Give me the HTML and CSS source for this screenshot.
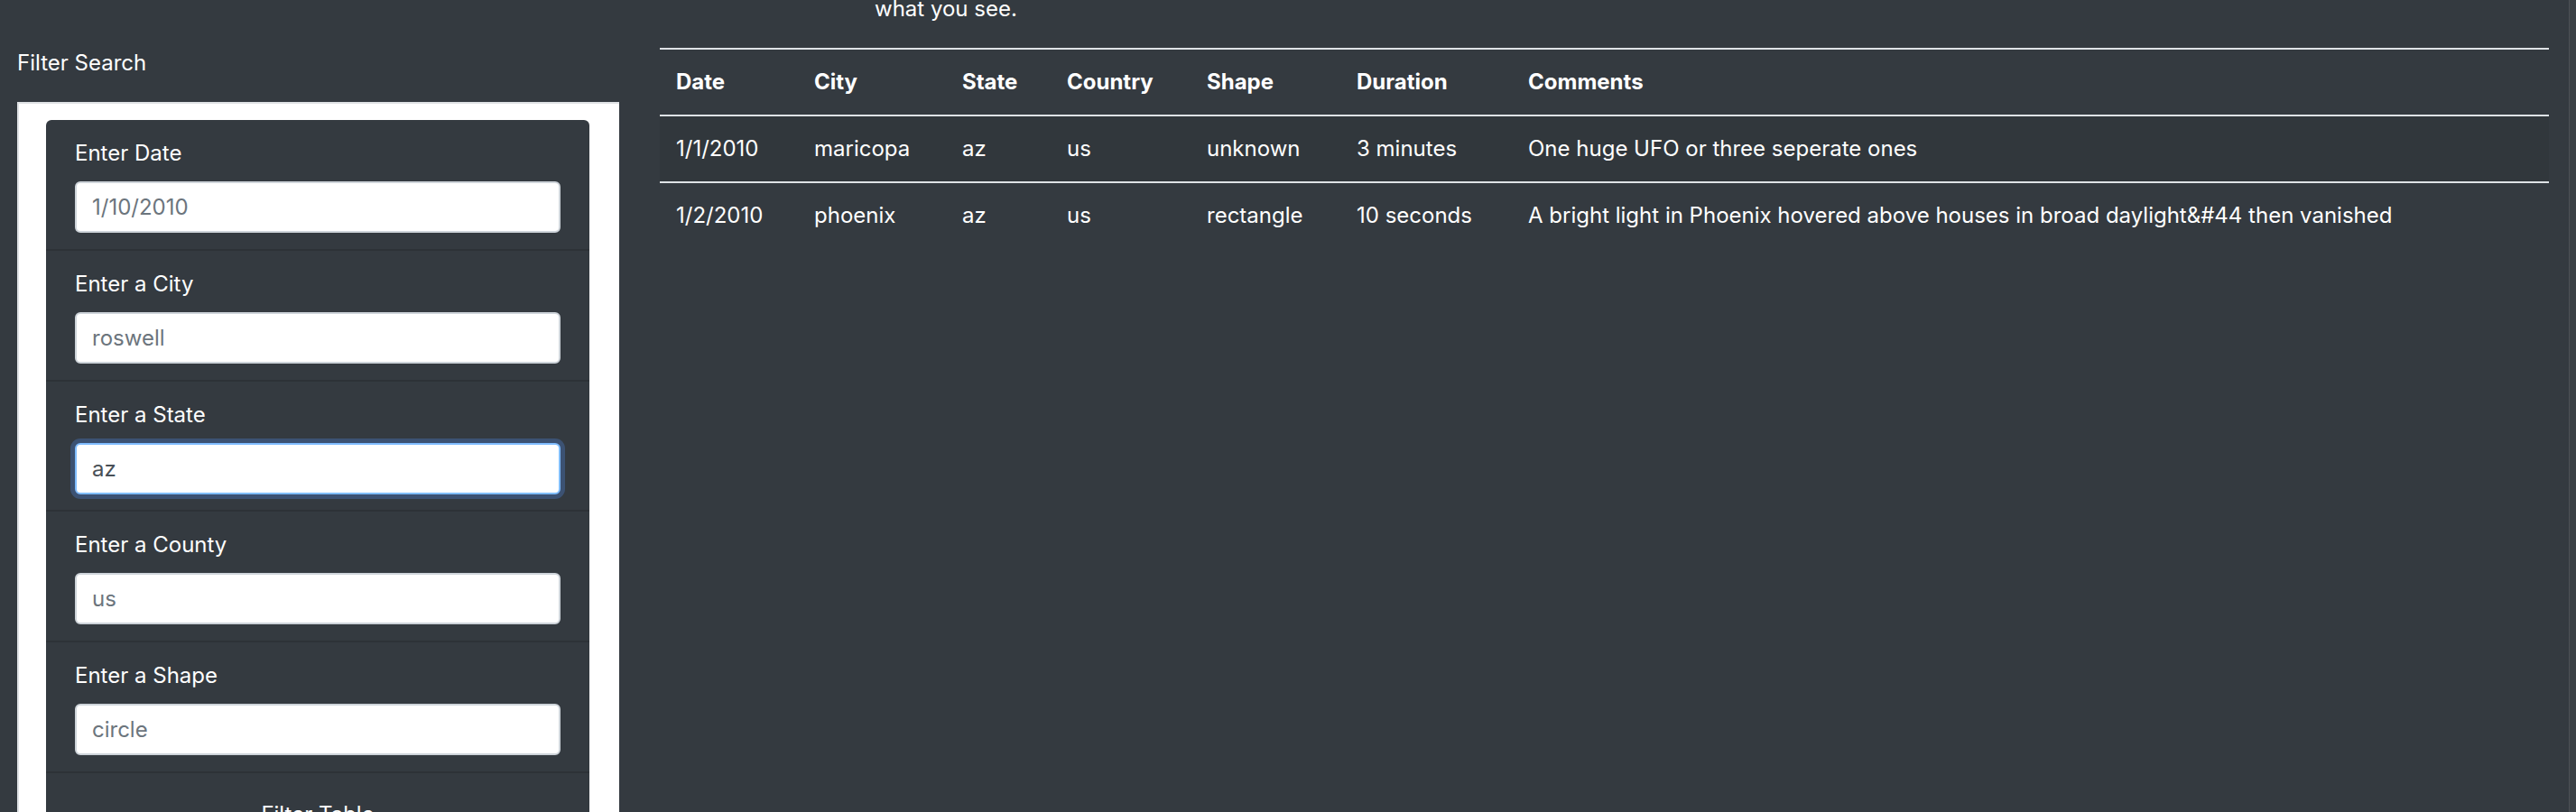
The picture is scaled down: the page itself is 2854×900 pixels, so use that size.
FILE: index.html
```html
<!DOCTYPE html>
<html lang="en">
<head>
<meta charset="utf-8">
<title>UFO Sightings</title>
<link rel="stylesheet" href="styles.css">
</head>
<body>
<div class="page">
  <div class="layout">
    <aside class="filters">
      <div class="filters-title">Filter Search</div>
      <div class="filters-box">
        <form class="filter-card">
          <div class="filter-item">
            <label class="filter-label" for="datetime">Enter Date</label>
            <input class="filter-input" id="datetime" type="text" placeholder="1/10/2010">
          </div>
          <div class="filter-item">
            <label class="filter-label" for="city">Enter a City</label>
            <input class="filter-input" id="city" type="text" placeholder="roswell">
          </div>
          <div class="filter-item">
            <label class="filter-label" for="state">Enter a State</label>
            <input class="filter-input is-focused" id="state" type="text" value="az">
          </div>
          <div class="filter-item">
            <label class="filter-label" for="country">Enter a County</label>
            <input class="filter-input" id="country" type="text" placeholder="us">
          </div>
          <div class="filter-item">
            <label class="filter-label" for="shape">Enter a Shape</label>
            <input class="filter-input" id="shape" type="text" placeholder="circle">
          </div>
          <div class="filter-item filter-action">
            <button class="filter-btn" type="button">Filter Table</button>
          </div>
        </form>
      </div>
    </aside>
    <main class="results">
      <p class="intro">what you see.</p>
      <table class="ufo-table">
        <colgroup>
          <col class="c-date"><col class="c-city"><col class="c-state"><col class="c-country"><col class="c-shape"><col class="c-duration"><col class="c-comments">
        </colgroup>
        <thead>
          <tr><th>Date</th><th>City</th><th>State</th><th>Country</th><th>Shape</th><th>Duration</th><th>Comments</th></tr>
        </thead>
        <tbody>
          <tr class="striped"><td>1/1/2010</td><td>maricopa</td><td>az</td><td>us</td><td>unknown</td><td>3 minutes</td><td>One huge UFO or three seperate ones</td></tr>
          <tr><td>1/2/2010</td><td>phoenix</td><td>az</td><td>us</td><td>rectangle</td><td>10 seconds</td><td>A bright light in Phoenix hovered above houses in broad daylight&amp;#44 then vanished</td></tr>
        </tbody>
      </table>
    </main>
  </div>
  <div class="scrollbar"></div>
</div>
</body>
</html>
```

FILE: styles.css
```css
html, body {
  margin: 0;
  padding: 0;
  height: 900px;
  overflow: hidden;
  background: #343a40;
}
body {
  font-family: Inter, "Noto Sans", sans-serif;
  font-size: 24px;
  line-height: 36px;
  color: #fff;
}
.page {
  display: flex;
  height: 900px;
}
.layout {
  flex: 1;
  display: flex;
  gap: 45px;
  padding: 0 22px 0 19px;
  min-width: 0;
}
.filters {
  width: 667px;
  flex: none;
}
.filters-title {
  margin-top: 52px;
  margin-bottom: 25px;
}
.filters-box {
  background: #fff;
  border: 2px solid #dfe2e5;
  border-right: 0;
  border-bottom: 0;
  padding: 18px 33px 0 30px;
}
.filter-card {
  background: #343a40;
  border-radius: 6px;
  margin: 0;
}
.filter-item {
  padding: 19px 32px 17.75px 32px;
  border-bottom: 2px solid #2d3237;
  display: flex;
  flex-direction: column;
}
.filter-label {
  display: block;
  margin-bottom: 13px;
}
.filter-input {
  box-sizing: border-box;
  height: 57px;
  width: 100%;
  padding: 0 17px;
  border: 2px solid #ced4da;
  border-radius: 6px;
  background: #fff;
  font-family: inherit;
  font-size: 24px;
  color: #495057;
  outline: none;
}
.filter-input::placeholder {
  color: #6c757d;
  opacity: 1;
}
.filter-input.is-focused {
  border-color: #80bdff;
  box-shadow: 0 0 0 5px #3c5273;
}
.filter-action {
  padding-top: 28px;
  align-items: center;
  border-bottom: 0;
}
.filter-btn {
  background: none;
  border: 0;
  padding: 0;
  font-family: inherit;
  font-size: 24px;
  line-height: 36px;
  color: #fff;
}
.results {
  flex: 1;
  min-width: 0;
}
.intro {
  margin: -8px 0 25px 0;
  padding-left: 238px;
}
.ufo-table {
  width: 100%;
  border-collapse: collapse;
  table-layout: fixed;
  border-top: 2px solid #dee2e6;
}
.c-date { width: 153px; }
.c-city { width: 164px; }
.c-state { width: 116px; }
.c-country { width: 155px; }
.c-shape { width: 166px; }
.c-duration { width: 190px; }
.ufo-table th,
.ufo-table td {
  padding: 18px;
  text-align: left;
  white-space: nowrap;
  vertical-align: top;
}
.ufo-table th {
  font-weight: 700;
  border-bottom: 2px solid #dee2e6;
}
.ufo-table td {
  font-weight: 400;
  border-top: 2px solid #dee2e6;
}
.ufo-table tr.striped td {
  background: rgba(0, 0, 0, 0.05);
}
.scrollbar {
  width: 7px;
  flex: none;
  border-left: 1px solid #4d5156;
  background: #3b4045;
}
```
